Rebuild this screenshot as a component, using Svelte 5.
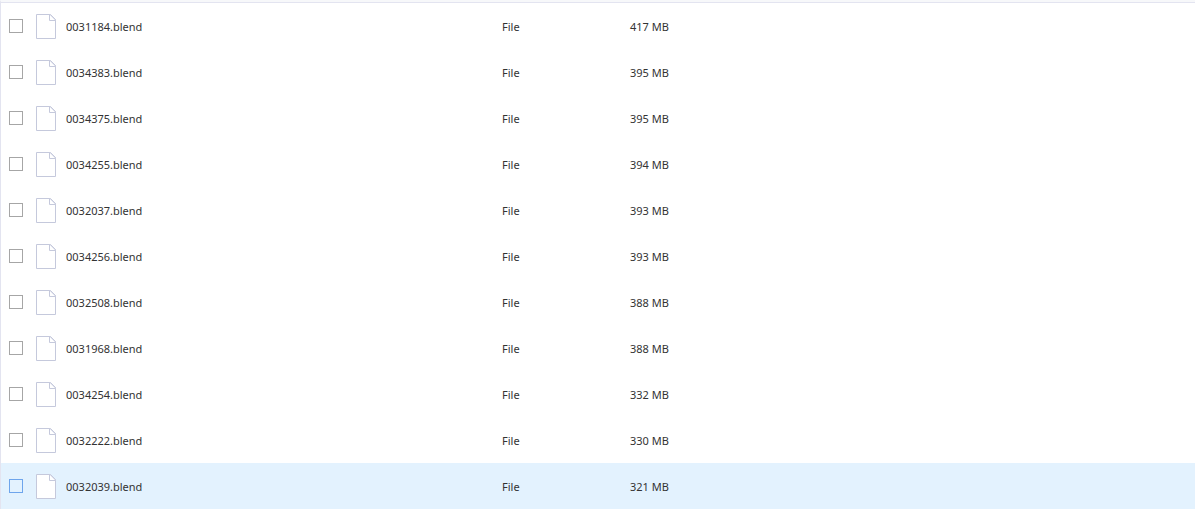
<script>
  let files = $state([
    { name: '0031184.blend', size: '417 MB' },
    { name: '0034383.blend', size: '395 MB' },
    { name: '0034375.blend', size: '395 MB' },
    { name: '0034255.blend', size: '394 MB' },
    { name: '0032037.blend', size: '393 MB' },
    { name: '0034256.blend', size: '393 MB' },
    { name: '0032508.blend', size: '388 MB' },
    { name: '0031968.blend', size: '388 MB' },
    { name: '0034254.blend', size: '332 MB' },
    { name: '0032222.blend', size: '330 MB' },
    { name: '0032039.blend', size: '321 MB' },
  ]);
  let active = $state(10);
</script>


<div class="list">
  <table>
    <tbody>
      {#each files as file, i}
        <tr class:active={i === active} onmouseenter={() => active = i}>
          <td class="check">
            <input type="checkbox" id="file-{i}" bind:checked={file.checked}>
          </td>
          <td class="name">
            <label for="file-{i}">
              <svg width="20" height="25" viewBox="0 0 20 25" aria-hidden="true">
                <path d="M.5 .5H14.5L19.5 5.5V24.5H.5Z" />
                <path d="M13.5 .5V6.5H19.5" />
                <path d="M14 .5L19.5 6" />
              </svg>
              <span class="text">{file.name}</span>
            </label>
          </td>
          <td class="type"><span class="text">File</span></td>
          <td><span class="text">{file.size}</span></td>
        </tr>
      {/each}
    </tbody>
  </table>
</div>


<style>
  :global(body) {
    margin: 0;
    background-color: #fff;
  }

  .list {
    border-top: 2px solid #f7f8fa;
    border-left: 1px solid #e3e4f0;
    font-family: "Noto Sans", "Open Sans", sans-serif;
    font-size: 11px;
    line-height: 16px;
    color: #333;
  }

  table {
    width: 100%;
    table-layout: fixed;
    border-spacing: 0;
    border-top: 1px solid #e3e4f0;
  }

  tr {
    height: 46px;
  }

  td {
    padding: 0;
    vertical-align: middle;
  }

  .active {
    background-color: #e3f2fe;
  }

  .check {
    width: 35px;
  }

  .name {
    width: 466px;
  }

  .type {
    width: 128px;
  }

  .text {
    display: block;
    padding-top: 2px;
  }

  label {
    display: flex;
    align-items: center;
    gap: 10px;
  }

  input {
    appearance: none;
    display: block;
    box-sizing: border-box;
    width: 14px;
    height: 14px;
    margin: 0 0 0 8px;
    border: 1px solid #a6a6a6;
    background-color: transparent;
  }
  input:checked {
    background-color: #6ea5ec;
  }
  .active input {
    border-color: #6ea5ec;
  }

  svg {
    fill: #fff;
    stroke: #c5c9dc;
  }
</style>
